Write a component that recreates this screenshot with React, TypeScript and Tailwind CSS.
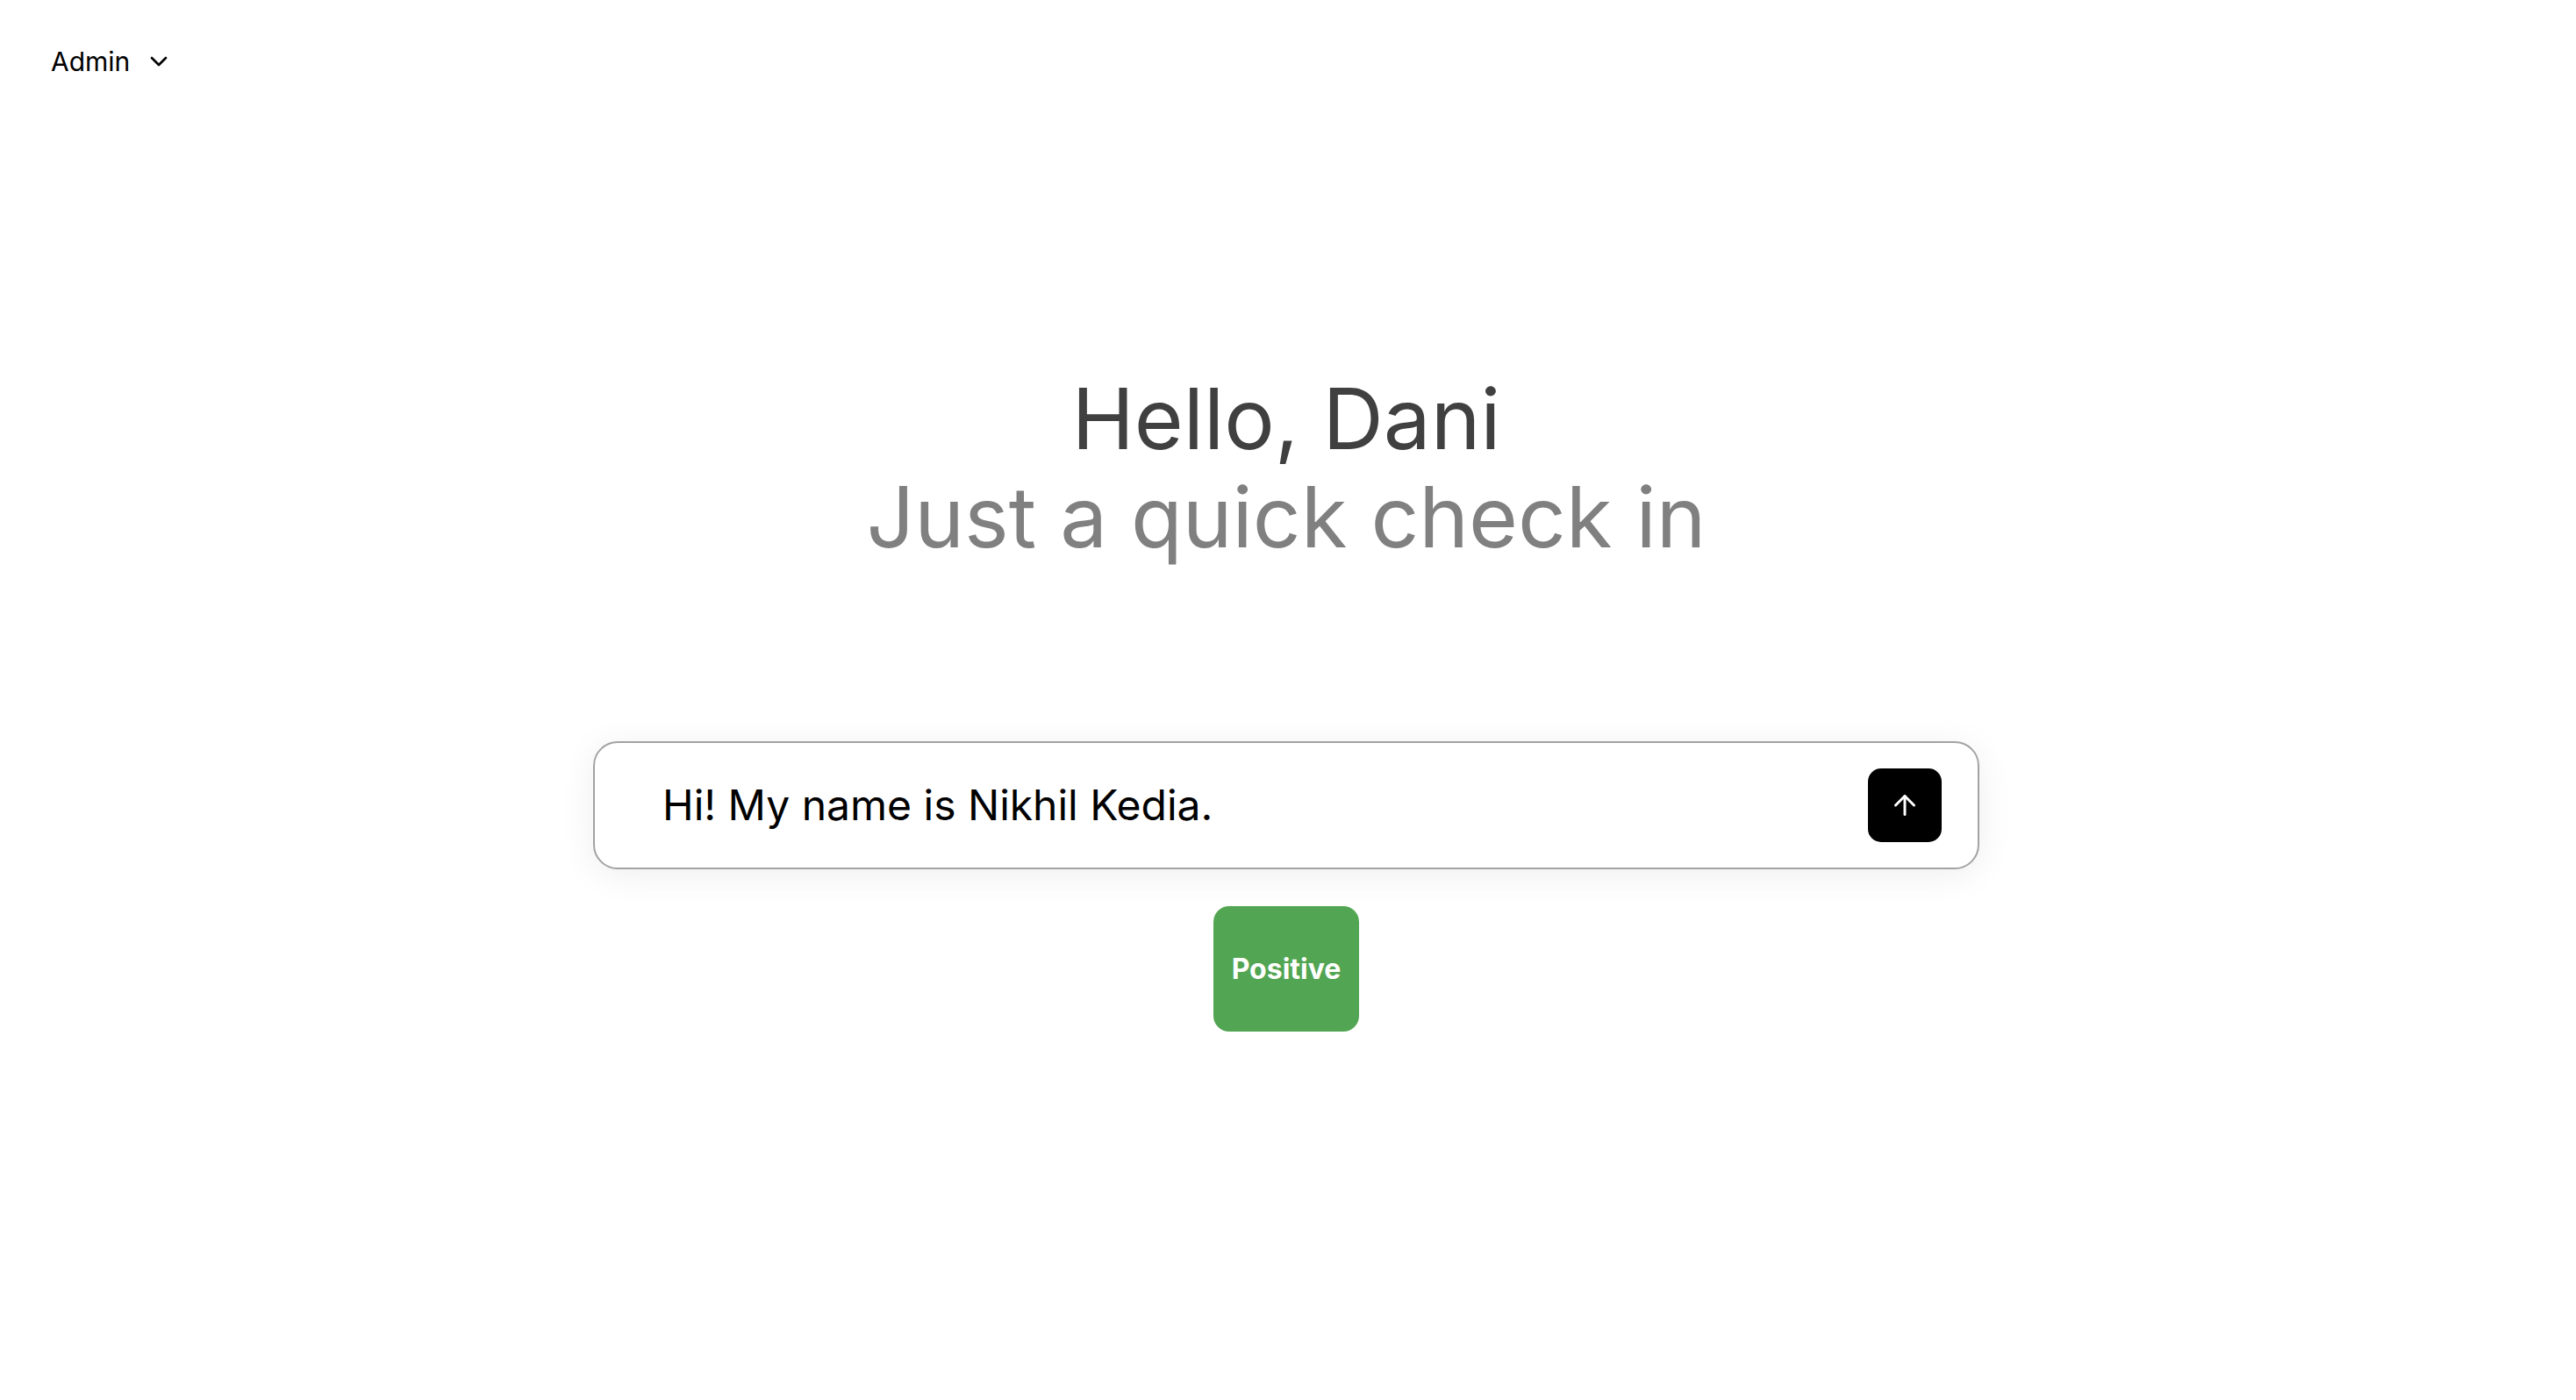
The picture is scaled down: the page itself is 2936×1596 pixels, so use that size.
import React from "react";
import { ArrowUp, ChevronDown } from "lucide-react";

export default function App() {
  return (
    <div className="min-h-screen w-full bg-white pr-[4px]" style={{ fontFamily: "Inter, 'Noto Sans', sans-serif" }}>
      <header className="flex items-center pl-[58px] pt-[50px]">
        <button className="flex items-center gap-[17px] text-[30px] leading-[40px] text-black">
          <span>Admin</span>
          <ChevronDown size={32} strokeWidth={2} />
        </button>
      </header>
      <main className="flex flex-col items-center">
        <h1 className="mt-[331px] text-center text-[96px] font-normal leading-[112px] text-[#404040]">
          Hello, Dani
        </h1>
        <h2 className="text-center text-[96px] font-normal leading-[112px] text-[#808080]">
          Just a quick check in
        </h2>
        <div className="mt-[200px] flex h-[146px] w-[1580px] items-center rounded-[28px] border-2 border-[#a3a3a3] bg-white pl-[77px] pr-[41px] shadow-[0_6px_40px_rgba(0,0,0,0.07)]">
          <div className="flex-1 text-[48px] leading-[60px] text-black">Hi! My name is Nikhil Kedia.</div>
          <button className="flex h-[84px] w-[84px] items-center justify-center rounded-[15px] bg-black text-white">
            <ArrowUp size={36} strokeWidth={2} />
          </button>
        </div>
        <div className="mt-[42px] flex h-[143px] w-[166px] items-center justify-center rounded-[18px] bg-[#52a552] text-[32px] font-bold text-white">
          Positive
        </div>
      </main>
    </div>
  );
}
